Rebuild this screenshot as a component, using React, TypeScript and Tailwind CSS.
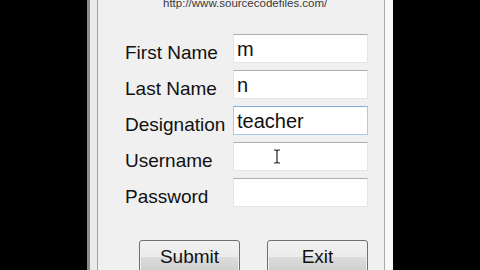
import React from "react";

const font = "font-['Liberation_Sans',Arial,sans-serif]";

function Field({ label, value, focused, cursor }: { label: string; value?: string; focused?: boolean; cursor?: boolean }) {
  return (
    <div className="flex h-[29px] shrink-0">
      <div className="w-[108px] pt-[4px] text-[19px] leading-[29px] text-[#111]">{label}</div>
      <div
        className={
          "relative w-[135px] h-[29px] bg-white border " +
          (focused
            ? "border-[#a9cbea] border-t-[#7fb0dc]"
            : "border-[#e2e6ea] border-t-[#a9acb2]")
        }
      >
        <div className="pl-[3px] pt-[1px] text-[20px] leading-[27px] text-[#111]">{value}</div>
        {cursor && (
          <svg className="absolute left-[39px] top-[6px]" width="8" height="15" viewBox="0 0 8 15">
            <path d="M1 1h2l1 1 1-1h2M4 2v11M1 14h2l1-1 1 1h2" stroke="#222" strokeWidth="1.2" fill="none" />
          </svg>
        )}
      </div>
    </div>
  );
}

function Btn({ label }: { label: string }) {
  return (
    <div className="w-[101px] h-[33px] shrink-0 rounded-[3px] border border-[#707070] p-[1px] bg-[#f0f0f0]">
      <div className="w-full h-full rounded-[2px] bg-[linear-gradient(#f2f2f2_0%,#ebebeb_50%,#dddddd_50%,#cfcfcf_100%)] flex justify-center pt-[1px] text-[19px] leading-[27px] text-[#111]">
        {label}
      </div>
    </div>
  );
}

export default function App() {
  return (
    <div className={"w-[480px] h-[270px] flex bg-black overflow-hidden " + font}>
      <div className="w-[87px] bg-black" />
      <div className="w-[3px] bg-[#8c8c8c]" />
      <div className="w-[7px] bg-[#ebebeb]" />
      <div className="w-[1px] bg-[#a0a0a0]" />
      <div className="w-[286px] bg-[#f0f0f0] flex flex-col overflow-hidden">
        <div className="h-[34px] shrink-0 pl-[65px] flex flex-col overflow-hidden">
          <div className="-mt-[3px] text-[11.5px] leading-[12px] text-[#3a3a3a] whitespace-nowrap">
            http://www.sourcecodefiles.com/
          </div>
        </div>
        <div className="pl-[27px] shrink-0 flex flex-col gap-[7px]">
          <Field label="First Name" value="m" />
          <Field label="Last Name" value="n" />
          <Field label="Designation" value="teacher" focused />
          <Field label="Username" cursor />
          <Field label="Password" />
        </div>
        <div className="mt-[33px] shrink-0 pl-[41px] flex gap-[27px]">
          <Btn label="Submit" />
          <Btn label="Exit" />
        </div>
      </div>
      <div className="w-[1px] bg-[#a8a8a8]" />
      <div className="w-[8px] bg-[#f8f8f8]" />
      <div className="flex-1 bg-black" />
    </div>
  );
}
